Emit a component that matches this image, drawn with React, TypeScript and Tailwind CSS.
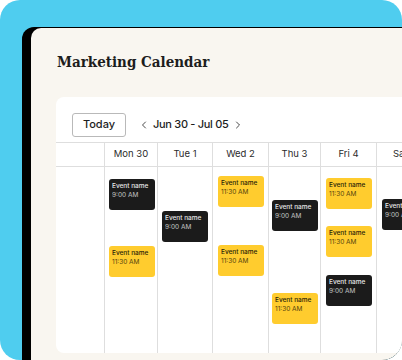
import { ChevronLeft, ChevronRight } from 'lucide-react';

type Ev = { top: number; dark: boolean };

interface Day {
    label: string;
    width: number;
    left: number;
    events: Ev[];
}

const days: Day[] = [
    { label: 'Mon 30', width: 53, left: 5, events: [{ top: 12, dark: true }, { top: 79, dark: false }] },
    { label: 'Tue 1', width: 55, left: 5, events: [{ top: 44, dark: true }] },
    { label: 'Wed 2', width: 56, left: 6, events: [{ top: 9, dark: false }, { top: 78, dark: false }] },
    { label: 'Thu 3', width: 52, left: 4, events: [{ top: 33, dark: true }, { top: 126, dark: false }] },
    { label: 'Fri 4', width: 56, left: 6, events: [{ top: 11, dark: false }, { top: 59, dark: false }, { top: 108, dark: true }] },
    { label: 'Sat 5', width: 56, left: 6, events: [{ top: 32, dark: true }] },
];

function EventCard({ ev, left }: { ev: Ev; left: number }) {
    return (
        <div
            className={
                ev.dark
                    ? 'absolute w-[46px] h-[31px] rounded-[3px] bg-[#1b1b1b] text-[#e8e8e8] px-[3px] pt-[3px]'
                    : 'absolute w-[46px] h-[31px] rounded-[3px] bg-[#ffcc2e] text-[#2a2208] px-[3px] pt-[3px]'
            }
            style={{ top: ev.top, left }}
        >
            <p className="text-[6.5px] leading-[9px] font-medium">Event name</p>
            <p className="text-[6.5px] leading-[9px] opacity-80">{ev.dark ? '9:00 AM' : '11:30 AM'}</p>
        </div>
    );
}

export default function App() {
    return (
        <div className="w-[402px] h-[360px] bg-white font-['Inter',sans-serif]">
            <div className="h-full rounded-[20px] bg-[#4fcdef] overflow-hidden pt-[27px] pl-[22px]">
                <div className="h-full bg-black rounded-tl-[12px] pt-px pl-[9px]">
                    <div className="h-full bg-[#f9f6f0] rounded-tl-[10px] pl-[25px] pt-[24px] overflow-hidden">
                        <h1 className="font-['DejaVu_Serif_Condensed','DejaVu_Serif',serif] font-bold text-[15px] leading-[21px] text-[#1d1d1d] pl-px whitespace-nowrap">
                            Marketing Calendar
                        </h1>

                        <div className="mt-[24px] h-[256px] bg-white rounded-l-[8px] flex flex-col">
                            {/* toolbar */}
                            <div className="flex items-center pt-[10px] pl-[16px] h-[45px] shrink-0">
                                <button className="w-[54px] h-[24px] border border-[#b9b9b9] rounded-[3px] text-[11px] font-medium text-[#1d1d1d]">
                                    Today
                                </button>
                                <div className="flex items-center ml-[12px] text-[11px] font-medium text-[#1d1d1d] tracking-[-0.3px]">
                                    <ChevronLeft size={12} strokeWidth={1.6} />
                                    <span className="mx-[3px]">Jun 30 - Jul 05</span>
                                    <ChevronRight size={12} strokeWidth={1.6} />
                                </div>
                            </div>

                            {/* grid */}
                            <div className="flex flex-1 border-t border-[#dedede]">
                                <div className="w-[48px] shrink-0 flex flex-col">
                                    <div className="h-[23px] border-b border-[#dedede] box-content" />
                                </div>
                                {days.map((d) => (
                                    <div key={d.label} className="shrink-0 flex flex-col border-l border-[#dedede]" style={{ width: d.width }}>
                                        <div className="h-[23px] box-content border-b border-[#dedede] flex items-center justify-center text-[9.5px] text-[#2b2b2b] whitespace-nowrap">
                                            {d.label}
                                        </div>
                                        <div className="relative flex-1">
                                            {d.events.map((ev, i) => (
                                                <EventCard key={i} ev={ev} left={d.left - 1} />
                                            ))}
                                        </div>
                                    </div>
                                ))}
                            </div>
                        </div>
                    </div>
                </div>
            </div>
        </div>
    );
}
